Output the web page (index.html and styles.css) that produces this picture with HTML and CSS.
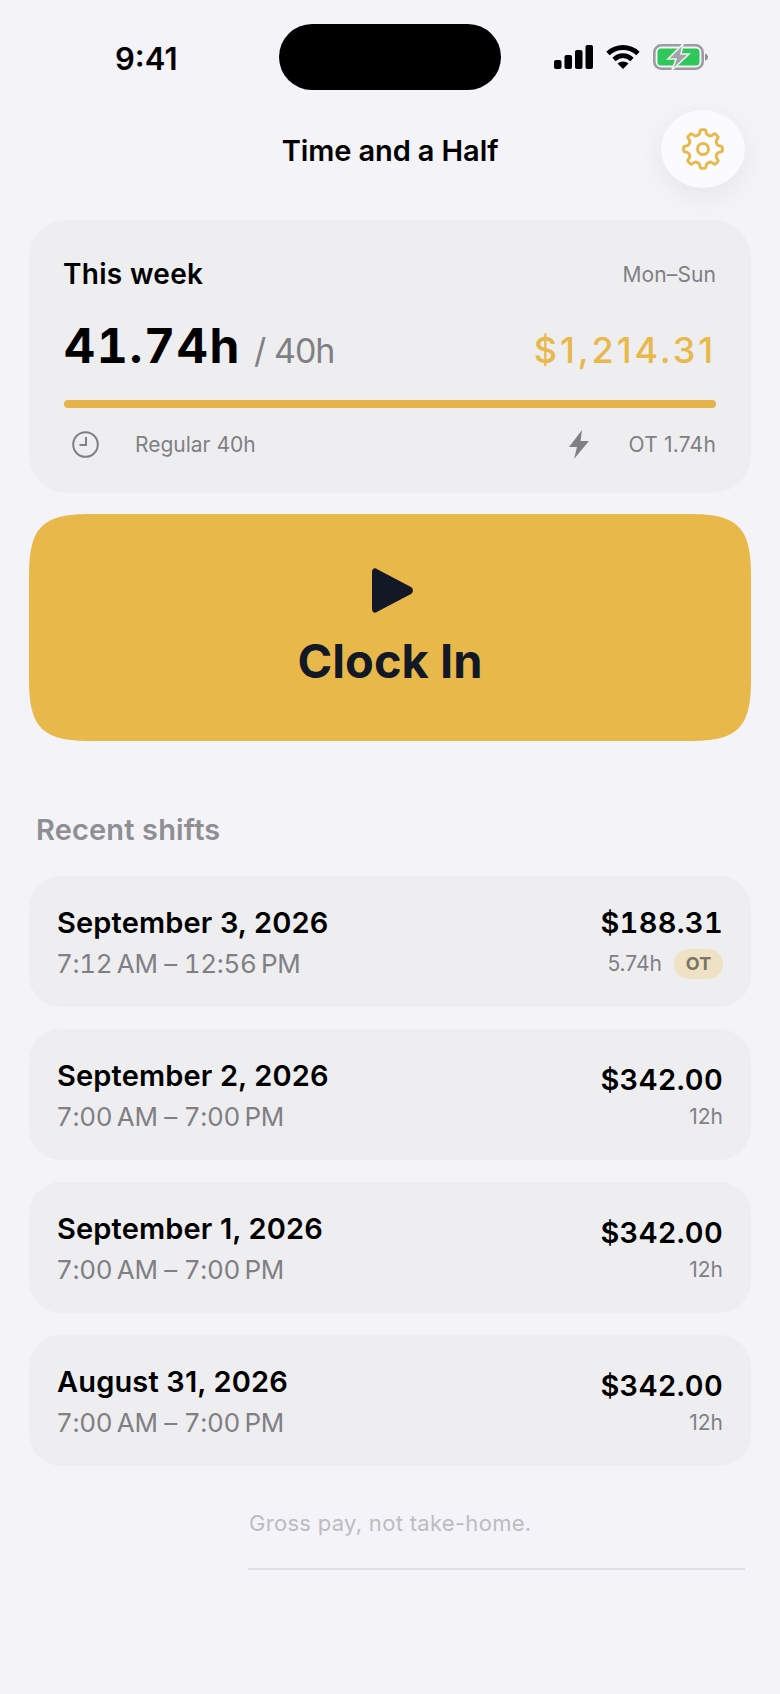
FILE: index.html
```html
<!DOCTYPE html>
<html>
    <head>
        <link rel="stylesheet" href="styles.css">
    </head>
    <body>
        <div class="status">
            <div class="clock">9:41</div>
            <div class="island"></div>
            <div class="status-icons">
                <svg class="signal" viewBox="0 0 39 24" fill="#000">
                    <rect x="0" y="15" width="7.5" height="9" rx="2"/>
                    <rect x="10.5" y="10" width="7.5" height="14" rx="2"/>
                    <rect x="21" y="5" width="7.5" height="19" rx="2"/>
                    <rect x="31.5" y="0" width="7.5" height="24" rx="2"/>
                </svg>
                <svg class="wifi" viewBox="0 0 34 24" fill="none" stroke="#000" stroke-width="4.8">
                    <path d="M2 8.5C10.5 0.5 23.5 0.5 32 8.5"/>
                    <path d="M8 14.5C13.500 9.500 20.500 9.500 26 14.5"/>
                    <path d="M17 24l-5.500-5.500c3-2.700 8-2.700 11 0z" fill="#000" stroke="none"/>
                </svg>
                <svg class="battery" viewBox="0 0 56 26">
                    <rect x="1.300" y="1.300" width="48.400" height="23.400" rx="7" fill="none" stroke="#9c9ca0" stroke-width="2.600"/>
                    <rect x="4.500" y="4.500" width="42" height="17" rx="3.500" fill="#30c75a"/>
                    <path d="M52 9.500c2 .5 3 2 3 3.500s-1 3-3 3.500z" fill="#8e8e93"/>
                    <path d="M30 0L15 15h8l-4 11 17-16h-8z" fill="#a4a4a8" stroke="#f0f0f4" stroke-width="1.600"/>
                </svg>
            </div>
        </div>

        <div class="nav">
            <h1>Time and a Half</h1>
            <button class="gear">
                <svg viewBox="0 0 48 48" fill="none" stroke="#e8b84b" stroke-width="2.800" stroke-linecap="round" stroke-linejoin="round">
                    <defs>
                        <path id="tooth" d="M18.560 10.880Q20.400 10.400 20.800 9L21.200 6.600Q21.400 5.400 22.600 5.400H25.400Q26.600 5.400 26.800 6.600L27.200 9Q27.600 10.400 29.440 10.880"/>
                    </defs>
                    <use href="#tooth"/>
                    <use href="#tooth" transform="rotate(45 24 24)"/>
                    <use href="#tooth" transform="rotate(90 24 24)"/>
                    <use href="#tooth" transform="rotate(135 24 24)"/>
                    <use href="#tooth" transform="rotate(180 24 24)"/>
                    <use href="#tooth" transform="rotate(225 24 24)"/>
                    <use href="#tooth" transform="rotate(270 24 24)"/>
                    <use href="#tooth" transform="rotate(315 24 24)"/>
                    <circle cx="24" cy="24" r="5.300"/>
                </svg>
            </button>
        </div>

        <div class="week">
            <div class="week-top">
                <span class="week-label">This week</span>
                <span class="week-range">Mon–Sun</span>
            </div>
            <div class="week-totals">
                <div><span class="hours">41.74h</span><span class="goal">/ 40h</span></div>
                <span class="pay">$1,214.31</span>
            </div>
            <div class="bar"></div>
            <div class="week-foot">
                <div class="foot-item">
                    <svg class="icon-clock" viewBox="0 0 27 27" fill="none" stroke="#808084" stroke-width="2">
                        <circle cx="13.500" cy="13.500" r="12.300"/>
                        <path d="M14 6v8H7.500"/>
                    </svg>
                    <span class="reg">Regular 40h</span>
                </div>
                <div class="foot-item">
                    <svg class="icon-bolt" viewBox="0 0 20 29" fill="#808084">
                        <path d="M13 0L0 17h8L5 29l15-18h-8.500z"/>
                    </svg>
                    <span class="ot">OT 1.74h</span>
                </div>
            </div>
        </div>

        <button class="clock-in">
            <svg viewBox="0 0 41 45" fill="#121826">
                <path d="M0 4C0 .8 2.800-.8 5.200 1.200L39 19c2.500 1.600 2.500 5.400 0 7L5.200 43.800C2.800 45.800 0 44.200 0 41z"/>
            </svg>
            <span>Clock In</span>
        </button>

        <h2 class="recent">Recent shifts</h2>

        <div class="shifts">
            <div class="shift">
                <div class="shift-left">
                    <div class="date">September 3, 2026</div>
                    <div class="time">7:12&#8201;AM – 12:56&#8201;PM</div>
                </div>
                <div class="shift-right">
                    <div class="amount">$188.31</div>
                    <div class="len">5.74h <span class="badge">OT</span></div>
                </div>
            </div>
            <div class="shift">
                <div class="shift-left">
                    <div class="date">September 2, 2026</div>
                    <div class="time">7:00&#8201;AM – 7:00&#8201;PM</div>
                </div>
                <div class="shift-right">
                    <div class="amount">$342.00</div>
                    <div class="len">12h</div>
                </div>
            </div>
            <div class="shift">
                <div class="shift-left">
                    <div class="date">September 1, 2026</div>
                    <div class="time">7:00&#8201;AM – 7:00&#8201;PM</div>
                </div>
                <div class="shift-right">
                    <div class="amount">$342.00</div>
                    <div class="len">12h</div>
                </div>
            </div>
            <div class="shift">
                <div class="shift-left">
                    <div class="date">August 31, 2026</div>
                    <div class="time">7:00&#8201;AM – 7:00&#8201;PM</div>
                </div>
                <div class="shift-right">
                    <div class="amount">$342.00</div>
                    <div class="len">12h</div>
                </div>
            </div>
        </div>

        <div class="note">Gross pay, not take-home.</div>
        <div class="rule"></div>
    </body>
</html>
```
FILE: styles.css
```css
*{
    margin: 0;
    padding: 0;
    box-sizing: border-box;
    font-family: 'Inter', sans-serif;
}
html, body{
    height: 100%;
    overflow: hidden;
}
body{
    background: #f3f3f8;
    color: #000;
}
button{
    border: 0;
}

/* status bar */
.status{
    display: flex;
    align-items: center;
    height: 66px;
    margin-top: 24px;
    padding-left: 115px;
}
.clock{
    width: 164px;
    padding-top: 2px;
    font-size: 31px;
    font-weight: 600;
}
.island{
    width: 222px;
    height: 66px;
    background: #000;
    border-radius: 33px;
}
.status-icons{
    display: flex;
    align-items: center;
    margin-left: 53px;
}
.signal{
    width: 39px;
    height: 24px;
}
.wifi{
    width: 36px;
    height: 24px;
    margin-left: 12px;
}
.battery{
    width: 56px;
    height: 26px;
    margin-left: 12px;
}

/* header */
.nav{
    position: relative;
    display: flex;
    justify-content: center;
    align-items: center;
    height: 78px;
    margin-top: 20px;
}
.nav h1{
    padding-top: 2px;
    font-size: 29px;
    font-weight: 600;
    letter-spacing: -0.1px;
}
.gear{
    position: absolute;
    left: 661px;
    top: 0;
    width: 84px;
    height: 78px;
    border-radius: 50%;
    background: #fbfbfe;
    box-shadow: 0 8px 30px rgba(0,0,0,.06);
    display: flex;
    align-items: center;
    justify-content: center;
}
.gear svg{
    width: 50px;
    height: 50px;
    margin-right: 1px;
}

/* this week card */
.week{
    margin: 32px 29px 0;
    height: 273px;
    padding: 37px 35px 0;
    background: #eeeef1;
    border-radius: 38px;
}
.week-top, .week-totals, .week-foot{
    display: flex;
    justify-content: space-between;
    align-items: center;
}
.week-label{
    margin-left: -1px;
    font-size: 28px;
    font-weight: 600;
    letter-spacing: 0.3px;
}
.week-range{
    font-size: 21px;
    letter-spacing: 0.1px;
    color: #808084;
}
.week-totals{
    align-items: baseline;
    margin-top: 25px;
}
.hours{
    font-size: 48px;
    font-weight: 700;
    font-variant-numeric: tabular-nums;
    letter-spacing: 1.700px;
}
.goal{
    font-size: 34px;
    color: #808084;
    letter-spacing: -1px;
    margin-left: 13px;
}
.pay{
    font-size: 36px;
    font-weight: 500;
    color: #e8b84b;
    letter-spacing: 2.900px;
}
.bar{
    height: 8px;
    margin-top: 25px;
    background: #e5b349;
    border-radius: 4px;
}
.week-foot{
    margin-top: 22px;
    padding-left: 8px;
    font-size: 21px;
    color: #808084;
}
.foot-item{
    display: flex;
    align-items: center;
}
.icon-clock{
    width: 27px;
    height: 27px;
    margin-right: 36px;
}
.icon-bolt{
    width: 20px;
    height: 29px;
    margin-right: 40px;
}
.ot{
    letter-spacing: 0.2px;
}

/* big button */
.clock-in{
    display: flex;
    flex-direction: column;
    align-items: center;
    justify-content: center;
    width: 722px;
    height: 227px;
    margin: 21px 29px 0;
    padding-top: 2px;
    background: #e8b84b;
    color: #121826;
    clip-path: path('M62 0H660C709 0 722 13 722 62V165C722 214 709 227 660 227H62C13 227 0 214 0 165V62C0 13 13 0 62 0Z');
}
.clock-in svg{
    width: 41px;
    height: 45px;
    margin-left: 4px;
}
.clock-in span{
    margin-top: 19px;
    font-size: 47px;
    font-weight: 700;
    line-height: 58px;
}

/* shift list */
.recent{
    margin: 71px 0 0 36px;
    font-size: 29px;
    font-weight: 600;
    line-height: 36px;
    letter-spacing: 0.15px;
    color: #8e8e93;
}
.shifts{
    display: flex;
    flex-direction: column;
    gap: 22px;
    margin: 28px 29px 0;
}
.shift{
    display: flex;
    justify-content: space-between;
    align-items: center;
    height: 131px;
    padding: 0 28px;
    background: #eeeef1;
    border-radius: 32px;
}
.shift-left{
    padding-top: 1px;
}
.date{
    font-size: 29px;
    font-weight: 600;
    line-height: 36px;
    letter-spacing: 0.15px;
}
.time{
    margin-top: 7px;
    margin-left: -1px;
    font-size: 26px;
    font-variant-numeric: tabular-nums;
    letter-spacing: -0.3px;
    color: #808084;
    line-height: 32px;
}
.shift-right{
    padding-top: 2px;
    text-align: right;
}
.amount{
    font-size: 29px;
    font-weight: 600;
    font-variant-numeric: tabular-nums;
    line-height: 36px;
    letter-spacing: 0.3px;
}
.len{
    display: flex;
    justify-content: flex-end;
    align-items: center;
    gap: 12px;
    margin-top: 6px;
    font-size: 21px;
    color: #808084;
    line-height: 26px;
}
.badge{
    width: 49px;
    height: 30px;
    margin: 2px 0;
    background: #efe2c4;
    border-radius: 15px;
    color: #7a7466;
    font-size: 18px;
    font-weight: 700;
    line-height: 30px;
    text-align: center;
}

/* footer */
.note{
    margin: 42px 0 0 249px;
    font-size: 22px;
    color: #bcbcc2;
    line-height: 30px;
    letter-spacing: 0.3px;
}
.rule{
    height: 2px;
    margin: 30px 35px 0 248px;
    background: #e0e0e6;
}
```
